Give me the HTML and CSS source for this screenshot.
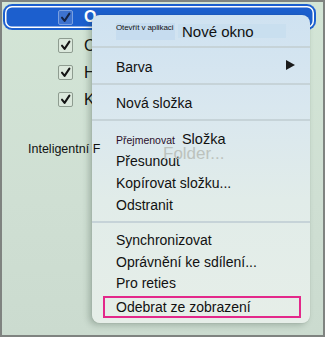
FILE: index.html
```html
<!DOCTYPE html>
<html lang="cs">
<head>
    <meta charset="UTF-8">
    <title>Kontextová nabídka složky</title>
    <link rel="stylesheet" href="styles.css">
</head>
<body>
    <div class="frame">
        <ul class="folders">
            <li class="folder selected">
                <span class="check">
                    <svg viewBox="0 0 14 14"><path d="M3.2 7.2 L6 10.6 L11.2 2.8"/></svg>
                </span>
                <span class="name">O</span>
            </li>
            <li class="folder">
                <span class="check">
                    <svg viewBox="0 0 14 14"><path d="M3.2 7.2 L6 10.6 L11.2 2.8"/></svg>
                </span>
                <span class="name">C</span>
            </li>
            <li class="folder">
                <span class="check">
                    <svg viewBox="0 0 14 14"><path d="M3.2 7.2 L6 10.6 L11.2 2.8"/></svg>
                </span>
                <span class="name">H</span>
            </li>
            <li class="folder">
                <span class="check">
                    <svg viewBox="0 0 14 14"><path d="M3.2 7.2 L6 10.6 L11.2 2.8"/></svg>
                </span>
                <span class="name">K</span>
            </li>
        </ul>

        <div class="smart">Inteligentní F</div>

        <!-- kontextová nabídka -->
        <div class="menu">
            <div class="section open">
                <span class="open-label">Otevřít v aplikaci</span>
                <span class="open-new">Nové okno</span>
            </div>
            <div class="section">
                <div class="item submenu">
                    <span>Barva</span>
                    <span class="arrow"></span>
                </div>
            </div>
            <div class="section">
                <div class="item">Nová složka</div>
            </div>
            <div class="section">
                <div class="item rename">
                    <span class="rename-label">Přejmenovat</span>
                    <span class="rename-name">Složka</span>
                    <span class="ghost">Folder...</span>
                </div>
                <div class="item">Přesunout</div>
                <div class="item">Kopírovat složku...</div>
                <div class="item">Odstranit</div>
            </div>
            <div class="section last">
                <div class="item tight">Synchronizovat</div>
                <div class="item tight">Oprávnění ke sdílení...</div>
                <div class="item tight">Pro reties</div>
                <div class="item marked">Odebrat ze zobrazení</div>
            </div>
        </div>
    </div>
</body>
</html>
```

FILE: styles.css
```css
html, body {
    margin: 0;
    padding: 0;
}

body {
    font-family: 'Liberation Sans', Arial, sans-serif;
    color: #111;
}

.frame {
    position: relative;
    width: 325px;
    height: 337px;
    box-sizing: border-box;
    border: 2px solid #7f8380;
    background: linear-gradient(180deg, #d3e5d6 0%, #cfdfd3 60%, #cbdbcf 100%);
    overflow: hidden;
}

/* Seznam složek */
.folders {
    list-style: none;
    margin: 0;
    padding: 2px 0 0 0;
}

.folder {
    display: flex;
    align-items: center;
    height: 27px;
    padding-left: 56px;
}

.folder.selected {
    height: 26px;
    margin: 0 7px 2px 1px;
    padding-left: 55px;
    background: #1c5fce;
    border-radius: 9px;
    box-shadow: inset 0 0 0 2px #1c5fce, inset 0 0 0 3.5px #ffffff;
}

.check {
    width: 13px;
    height: 13px;
    border: 1px solid #8e9c90;
    border-radius: 2px;
    background: #dbe8dc;
    display: flex;
}

.check svg {
    width: 13px;
    height: 13px;
}

.check path {
    fill: none;
    stroke: #141414;
    stroke-width: 2.2;
    stroke-linecap: round;
    stroke-linejoin: round;
}

.selected .check {
    background: #3d72cf;
    border-color: #7aa0e0;
}

.selected .check path {
    stroke: #152445;
}

.name {
    margin-left: 11px;
    font-size: 16px;
}

.selected .name {
    color: #ffffff;
    font-weight: bold;
}

/* popisek leží nad stínem nabídky */
.smart {
    position: relative;
    z-index: 2;
    width: 70px;
    margin: 29px 0 0 26px;
    font-size: 12.5px;
    white-space: nowrap;
    color: #111;
}

/* Nabídka */
.menu {
    position: absolute;
    z-index: 1;
    left: 90px;
    top: 13px;
    width: 218px;
    height: 308px;
    border-radius: 8px;
    background: linear-gradient(180deg, #cfe2f1 0%, #d9e7ef 30%, #e1ece9 60%, #e6eee8 100%);
    box-shadow: -3px 2px 6px rgba(40, 60, 45, 0.28), 0 0 1px rgba(0, 0, 0, 0.25);
    font-size: 14px;
}

.section {
    padding: 7px 0 5px 24px;
    border-bottom: 2px solid #c6d3d8;
}

.section.last {
    border-bottom: none;
    padding-top: 7px;
    padding-bottom: 0;
}

.item {
    height: 22px;
    line-height: 22px;
    white-space: nowrap;
}

.item.tight {
    height: 21.5px;
    line-height: 21.5px;
}

/* Otevřít v aplikaci */
.section.open {
    display: flex;
    align-items: flex-start;
    height: 21px;
    padding-top: 8px;
    padding-bottom: 2px;
}

.open-label {
    width: 59px;
    height: 17px;
    background: #c6dcef;
    font-size: 8px;
    line-height: 10px;
    letter-spacing: -0.1px;
}

.open-new {
    margin-left: 3px;
    width: 104px;
    height: 14px;
    padding-left: 4px;
    background: #c9dfef;
    font-size: 15px;
    line-height: 15px;
    margin-top: 1px;
}

/* Barva */
.submenu {
    display: flex;
    justify-content: space-between;
    align-items: center;
    padding-right: 15px;
    margin-top: 1px;
}

.arrow {
    width: 0;
    height: 0;
    border-top: 5.5px solid transparent;
    border-bottom: 5.5px solid transparent;
    border-left: 9px solid #1a1a1a;
    margin-top: -4px;
}

/* Přejmenovat */
.rename {
    position: relative;
    display: flex;
    align-items: baseline;
}

.rename-label {
    font-size: 10.5px;
    color: #2a0f2a;
}

.rename-name {
    margin-left: 7px;
    font-size: 14.5px;
}

.ghost {
    position: absolute;
    left: 47px;
    top: 15px;
    font-size: 17px;
    color: #bcc2bd;
}

/* Odebrat ze zobrazení */
.marked {
    margin-left: -13px;
    margin-top: 1px;
    width: 198px;
    height: 22px;
    box-sizing: border-box;
    border: 2px solid #e3288a;
    padding-left: 11px;
    line-height: 18px;
}
```
